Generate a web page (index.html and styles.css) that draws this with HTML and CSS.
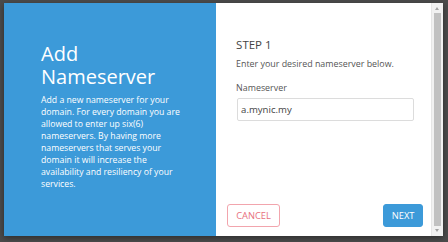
FILE: index.html
```html
<!DOCTYPE html>
<html lang="en">
<head>
    <meta charset="UTF-8">
    <meta name="viewport" content="width=device-width, initial-scale=1.0">
    <title>Add Nameserver</title>
    <link rel="stylesheet" href="styles.css">
</head>
<body>
    <div class="modal">
        <div class="intro">
            <h1>Add Nameserver</h1>
            <p>Add a new nameserver for your domain. For every domain you are allowed to enter up six(6) nameservers. By having more nameservers that serves your domain it will increase the availability and resiliency of your services.</p>
        </div>

        <div class="step">
            <div class="step-body">
                <h3>STEP 1</h3>
                <p class="hint">Enter your desired nameserver below.</p>
                <label for="ns">Nameserver</label>
                <input type="text" id="ns" value="a.mynic.my">
            </div>
            <div class="step-footer">
                <button class="btn btn-cancel">CANCEL</button>
                <button class="btn btn-next">NEXT</button>
            </div>
        </div>

        <div class="scrollbar">
            <div class="arrow arrow-up"></div>
            <div class="thumb"></div>
            <div class="arrow arrow-down"></div>
        </div>
    </div>
</body>
</html>
```

FILE: styles.css
```css
body {
    margin: 0;
    padding: 3px 5px 6px 4px;
    background-color: #4b4b4b;
    font-family: "Open Sans", "Noto Sans", sans-serif;
    height: 242px;
    box-sizing: border-box;
    overflow: hidden;
}
.modal {
    display: flex;
    height: 233px;
    background: white;
    box-shadow: 0 2px 6px rgba(0, 0, 0, 0.4);
}
.intro {
    width: 213px;
    box-sizing: border-box;
    background-color: #3c9ad9;
    color: white;
    padding: 39px 36px 0 37px;
}
.intro h1 {
    margin: 0;
    font-size: 20px;
    line-height: 23px;
    font-weight: normal;
}
.intro p {
    margin: 6px 0 0;
    font-size: 8.7px;
    line-height: 12px;
}
.step {
    flex: 1;
    display: flex;
    flex-direction: column;
    border-right: 1px solid #e6e6e6;
}
.step-body {
    padding: 35px 17px 0 20px;
    color: #555;
    font-size: 8.9px;
    line-height: 12px;
}
.step-body h3 {
    margin: 0;
    font-size: 11.5px;
    line-height: 14px;
    font-weight: normal;
    color: #444;
}
.hint {
    margin: 6px 0 0;
}
.step-body label {
    display: block;
    margin-top: 12px;
}
.step-body input {
    display: block;
    margin: 4px 0 0 1px;
    width: 177px;
    height: 23px;
    box-sizing: border-box;
    padding: 0 3px;
    border: 1px solid #dcdcdc;
    border-radius: 2px;
    font-family: inherit;
    font-size: 9.6px;
    color: #444;
}
.step-footer {
    margin-top: auto;
    display: flex;
    justify-content: space-between;
    padding: 0 8px 9px 11px;
}
.btn {
    height: 23px;
    border-radius: 3px;
    font-family: inherit;
    font-size: 9.3px;
    padding: 0;
}
.btn-cancel {
    width: 53px;
    background: white;
    border: 1px solid #f2a5ad;
    color: #e8707e;
}
.btn-next {
    width: 40px;
    background: #3c9ad9;
    border: 1px solid #3c9ad9;
    color: white;
}
.scrollbar {
    width: 11px;
    display: flex;
    flex-direction: column;
    background: #f1f1f1;
}
.arrow {
    height: 10px;
    position: relative;
}
.arrow::after {
    content: "";
    position: absolute;
    left: 3px;
    border-left: 2.5px solid transparent;
    border-right: 2.5px solid transparent;
}
.arrow-up::after {
    top: 4px;
    border-bottom: 3px solid #a3a3a3;
}
.arrow-down::after {
    top: 3px;
    border-top: 3px solid #a3a3a3;
}
.thumb {
    flex: 1;
    margin: 0 2px;
    background: #c1c1c1;
}
```
